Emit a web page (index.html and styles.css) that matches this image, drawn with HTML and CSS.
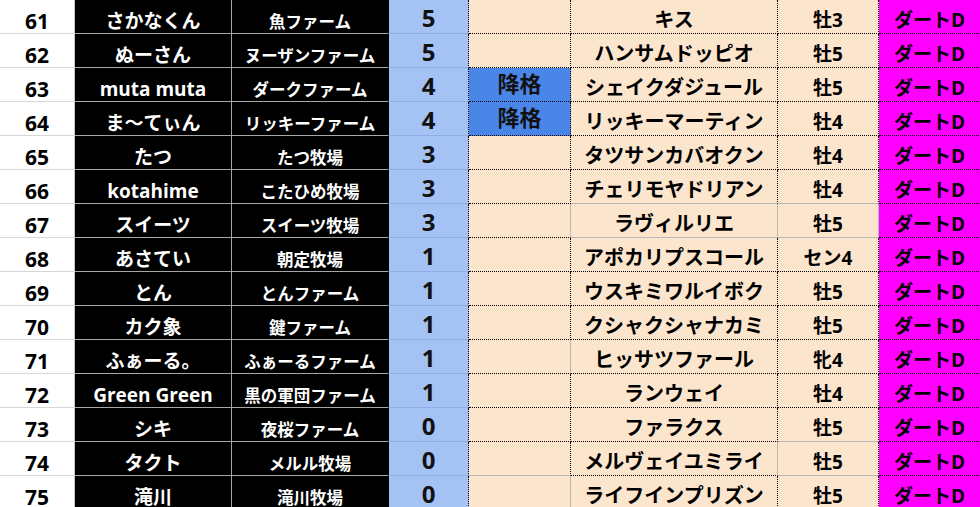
FILE: index.html
```html
<!DOCTYPE html>
<html lang="ja">
<head>
<meta charset="utf-8">
<title>Sheet</title>
<link rel="stylesheet" href="styles.css">
</head>
<body>
<div class="sheet">
  <div class="row"><div class="c c1">61</div><div class="c c2">さかなくん</div><div class="c c3">魚ファーム</div><div class="c c4">5</div><div class="c c5"></div><div class="c c6">キス</div><div class="c c7">牡3</div><div class="c c8">ダートD</div></div>
  <div class="row"><div class="c c1">62</div><div class="c c2">ぬーさん</div><div class="c c3">ヌーザンファーム</div><div class="c c4">5</div><div class="c c5"></div><div class="c c6">ハンサムドッピオ</div><div class="c c7">牡5</div><div class="c c8">ダートD</div></div>
  <div class="row"><div class="c c1">63</div><div class="c c2">muta muta</div><div class="c c3">ダークファーム</div><div class="c c4">4</div><div class="c c5 down">降格</div><div class="c c6">シェイクダジュール</div><div class="c c7">牡5</div><div class="c c8">ダートD</div></div>
  <div class="row"><div class="c c1">64</div><div class="c c2">ま〜てぃん</div><div class="c c3">リッキーファーム</div><div class="c c4">4</div><div class="c c5 down">降格</div><div class="c c6">リッキーマーティン</div><div class="c c7">牡4</div><div class="c c8">ダートD</div></div>
  <div class="row"><div class="c c1">65</div><div class="c c2">たつ</div><div class="c c3">たつ牧場</div><div class="c c4">3</div><div class="c c5"></div><div class="c c6">タツサンカバオクン</div><div class="c c7">牡4</div><div class="c c8">ダートD</div></div>
  <div class="row"><div class="c c1">66</div><div class="c c2">kotahime</div><div class="c c3">こたひめ牧場</div><div class="c c4">3</div><div class="c c5"></div><div class="c c6 gb">チェリモヤドリアン</div><div class="c c7 gb">牡4</div><div class="c c8">ダートD</div></div>
  <div class="row"><div class="c c1">67</div><div class="c c2">スイーツ</div><div class="c c3">スイーツ牧場</div><div class="c c4">3</div><div class="c c5 gr"></div><div class="c c6 gr gb">ラヴィルリエ</div><div class="c c7 gr gb">牡5</div><div class="c c8">ダートD</div></div>
  <div class="row"><div class="c c1">68</div><div class="c c2">あさてい</div><div class="c c3">朝定牧場</div><div class="c c4">1</div><div class="c c5"></div><div class="c c6">アポカリプスコール</div><div class="c c7">セン4</div><div class="c c8">ダートD</div></div>
  <div class="row"><div class="c c1">69</div><div class="c c2">とん</div><div class="c c3">とんファーム</div><div class="c c4">1</div><div class="c c5"></div><div class="c c6">ウスキミワルイボク</div><div class="c c7">牡5</div><div class="c c8">ダートD</div></div>
  <div class="row"><div class="c c1">70</div><div class="c c2">カク象</div><div class="c c3">鍵ファーム</div><div class="c c4">1</div><div class="c c5"></div><div class="c c6">クシャクシャナカミ</div><div class="c c7">牡5</div><div class="c c8">ダートD</div></div>
  <div class="row"><div class="c c1">71</div><div class="c c2">ふぁーる。</div><div class="c c3">ふぁーるファーム</div><div class="c c4">1</div><div class="c c5 gr"></div><div class="c c6">ヒッサツファール</div><div class="c c7">牝4</div><div class="c c8">ダートD</div></div>
  <div class="row"><div class="c c1">72</div><div class="c c2">Green Green</div><div class="c c3">黒の軍団ファーム</div><div class="c c4">1</div><div class="c c5"></div><div class="c c6">ランウェイ</div><div class="c c7">牡4</div><div class="c c8">ダートD</div></div>
  <div class="row"><div class="c c1">73</div><div class="c c2">シキ</div><div class="c c3">夜桜ファーム</div><div class="c c4">0</div><div class="c c5"></div><div class="c c6">ファラクス</div><div class="c c7 gb">牡5</div><div class="c c8">ダートD</div></div>
  <div class="row"><div class="c c1">74</div><div class="c c2">タクト</div><div class="c c3">メルル牧場</div><div class="c c4">0</div><div class="c c5 gb"></div><div class="c c6 gr">メルヴェイユミライ</div><div class="c c7 gb">牡5</div><div class="c c8">ダートD</div></div>
  <div class="row"><div class="c c1">75</div><div class="c c2">滝川</div><div class="c c3">滝川牧場</div><div class="c c4">0</div><div class="c c5 gr"></div><div class="c c6">ライフインプリズン</div><div class="c c7">牡5</div><div class="c c8">ダートD</div></div>
</div>
</body>
</html>
```

FILE: styles.css
```css
html, body {
  margin: 0;
  padding: 0;
  background: #ffffff;
  overflow: hidden;
}

body {
  width: 980px;
  height: 507px;
  font-family: "Open Sans", "Noto Sans CJK JP", sans-serif;
  font-weight: 700;
}

.sheet {
  display: flex;
  flex-direction: column;
  width: 981px;
}

.row {
  display: grid;
  grid-template-columns: 75px 157px 157px 80px 102px 207px 101px 102px;
  height: 34px;
}

.c {
  box-sizing: border-box;
  display: flex;
  justify-content: center;
  align-items: flex-end;
  line-height: 1;
  white-space: nowrap;
  overflow: hidden;
  border-right: 1px dotted #000;
  border-bottom: 1px dotted #000;
  padding-bottom: 3px;
}

.c1 {
  background: #ffffff;
  color: #000;
  font-size: 21px;
  padding-bottom: 1px;
  border-right: 1px solid #c4c4c4;
  border-bottom: 1px solid #d6d6d6;
}

.c2 {
  background: #000;
  color: #fff;
  font-size: 19px;
  padding-bottom: 2px;
  border-right: 1px solid #a6a6a6;
  border-bottom: 1px solid #a6a6a6;
}

.c3 {
  background: #000;
  color: #fff;
  font-size: 16.5px;
  padding-bottom: 3px;
  border-right: 1px solid #000;
  border-bottom: 1px solid #a6a6a6;
}

.c4 {
  background: #a4c2f4;
  color: #111;
  font-size: 24px;
  padding-bottom: 3px;
  border-bottom: 1px solid #8fafe2;
}

.c5 {
  background: #fce5cd;
}

.c5.down {
  background: #4a86e8;
  color: #111;
  font-size: 22px;
  align-items: center;
  padding-bottom: 3px;
}

.c6 {
  background: #fce5cd;
  color: #000;
  font-size: 20px;
}

.c7 {
  background: #fce5cd;
  color: #000;
  font-size: 19px;
}

.c8 {
  background: #ff00ff;
  color: #000;
  font-size: 19px;
}

.gb {
  border-bottom: 1px solid #b8b8b8;
}

.gr {
  border-right: 1px solid #b8b8b8;
}
```
